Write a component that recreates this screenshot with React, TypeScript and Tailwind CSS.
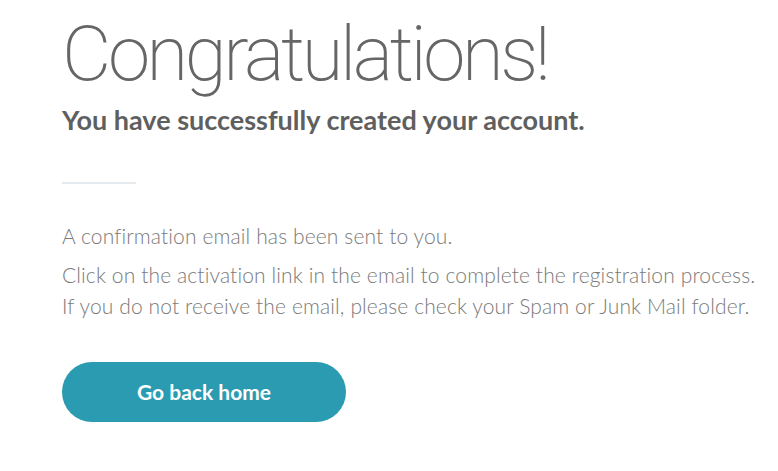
import React from 'react';

const App: React.FC = () => {
  return (
    <div className="min-h-screen bg-white pl-[62px] pt-[8px]">
      {/* Heading */}
      <h1 className="font-['Roboto',sans-serif] font-extralight text-[76px] leading-[92px] text-[#666666] tracking-[-3.4px]">
        Congratulations!
      </h1>
      <h2 className="mt-[3px] font-['Lato',sans-serif] font-bold text-[27px] leading-[34px] text-[#5f5f5f]">
        You have successfully created your account.
      </h2>

      {/* Divider */}
      <div className="mt-[45px] h-[2px] w-[74px] bg-[#e5eaee]" />

      {/* Message */}
      <div className="mt-[36px] font-['Lato',sans-serif] font-light text-[21px] leading-[31px] tracking-[0.12px] text-[#7a7a7a]">
        <p>A confirmation email has been sent to you.</p>
        <p className="mt-[8px]">
          Click on the activation link in the email to complete the registration process.
          <br />
          If you do not receive the email, please check your Spam or Junk Mail folder.
        </p>
      </div>

      {/* Action */}
      <button className="mt-[41px] h-[60px] w-[284px] rounded-full bg-[#2a9bb0] font-['Lato',sans-serif] font-bold text-[21px] text-white">
        Go back home
      </button>
    </div>
  );
};

export default App;
